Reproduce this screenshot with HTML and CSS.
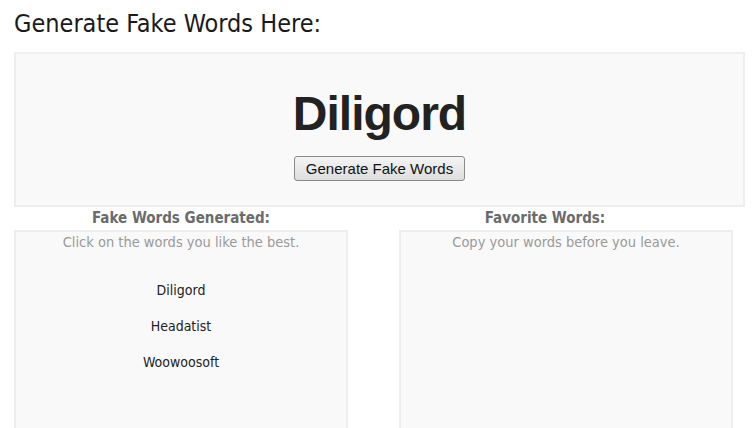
FILE: index.html
```html
<!DOCTYPE html>
<html lang="en">
<head>
    <meta charset="UTF-8">
    <title>Fake Word Generator</title>
    <link rel="stylesheet" href="styles.css">
</head>
<body>
    <h1 class="page-title">Generate Fake Words Here:</h1>

    <div class="generator">
        <div class="current-word">Diligord</div>
        <button type="button" class="generate-btn">Generate Fake Words</button>
    </div>

    <div class="lists">
        <div class="list-col">
            <h3 class="list-title">Fake Words Generated:</h3>
            <div class="list-box">
                <p class="hint">Click on the words you like the best.</p>
                <ul class="words">
                    <li>Diligord</li>
                    <li>Headatist</li>
                    <li>Woowoosoft</li>
                </ul>
            </div>
        </div>
        <div class="list-col fav-col">
            <h3 class="list-title">Favorite Words:</h3>
            <div class="list-box">
                <p class="hint">Copy your words before you leave.</p>
                <ul class="words"></ul>
            </div>
        </div>
    </div>
</body>
</html>
```

FILE: styles.css
```css
body { margin: 0; padding: 0 9px 0 14px; font-family: "DejaVu Sans Condensed", "DejaVu Sans", sans-serif; color: #222; background: #fff; overflow: hidden; }
.page-title { margin: 0; padding-top: 9px; height: 52px; box-sizing: border-box; font-size: 25px; font-weight: normal; line-height: 30px; color: #1a1a1a; }
.generator { border: 2px solid #eeeeee; background: #f9f9f9; text-align: center; box-sizing: border-box; height: 155px; padding-top: 34px; }
.current-word { font-family: "Liberation Sans", Arial, sans-serif; font-weight: bold; font-size: 48px; letter-spacing: -1px; line-height: 52px; color: #222; }
.generate-btn { margin-top: 16px; font-family: "Liberation Sans", Arial, sans-serif; font-size: 15px; color: #111; padding: 3px 11px; border: 1px solid #8a8a8a; border-radius: 3px; background: linear-gradient(#f4f4f4, #dedede); }
.lists { display: grid; grid-template-columns: 334px 376px; column-gap: 9px; }
.list-title { margin: 0; height: 23px; padding-top: 1px; box-sizing: border-box; font-size: 15px; line-height: 21px; text-align: center; color: #6b6b6b; }
.fav-col .list-box { margin-left: 42px; }
.list-box { height: 198px; box-sizing: border-box; border: 2px solid #eeeeee; border-bottom: none; background: #f9f9f9; text-align: center; }
.hint { margin: 0; font-size: 14.5px; line-height: 20px; color: #999; }
.words { list-style: none; margin: 28px 0 0; padding: 0; font-size: 14px; }
.words li { line-height: 20px; margin-bottom: 16px; }
```
